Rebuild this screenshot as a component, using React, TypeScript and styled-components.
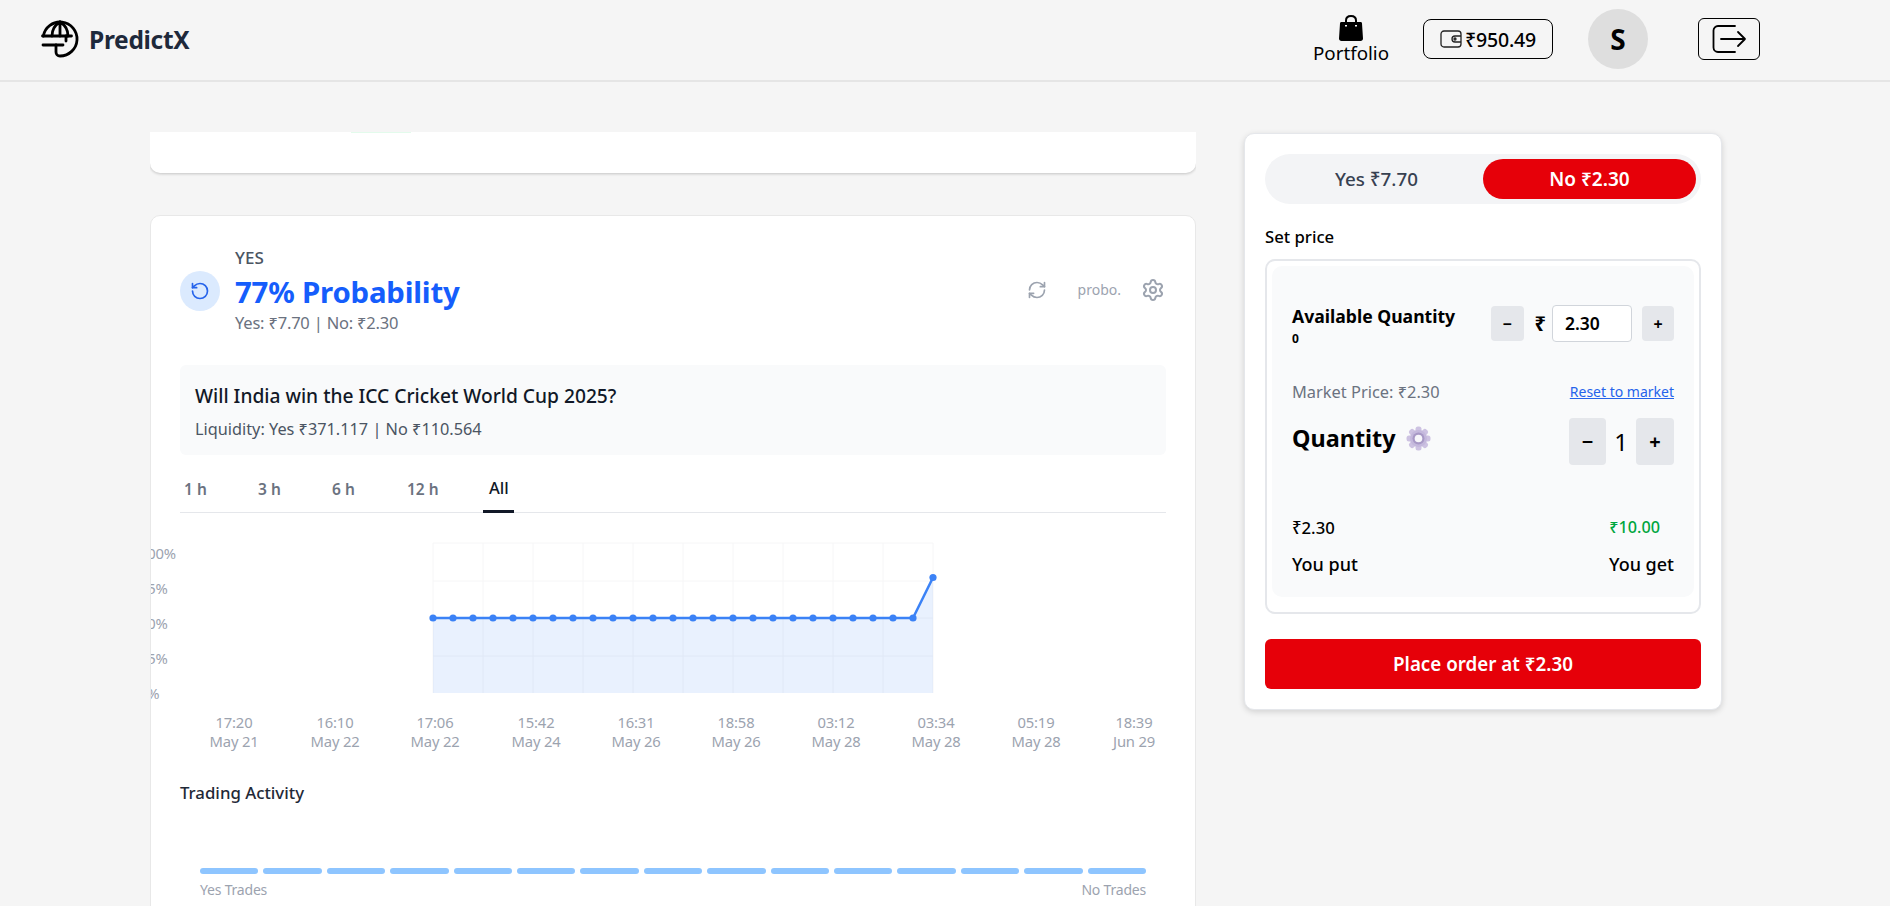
import React from 'react';
import styled, { createGlobalStyle } from 'styled-components';
import { RefreshCw, RotateCcw, Settings } from 'lucide-react';

const GlobalStyle = createGlobalStyle`
  html, body { margin: 0; padding: 0; height: 100%; overflow: hidden; background: #f5f5f5; }
  body { font-family: "Noto Sans", "Open Sans", sans-serif; color: #000; }
  * { box-sizing: border-box; }
`;

const Page = styled.div`
  width: 1890px;
  height: 906px;
  overflow: hidden;
  display: flex;
  flex-direction: column;
`;

const Header = styled.header`
  height: 82px;
  flex: none;
  display: flex;
  align-items: center;
  border-bottom: 2px solid #e5e5e5;
  padding: 0 130px 2px 40px;
`;

const Brand = styled.div`
  display: flex;
  align-items: center;
  gap: 9px;
  margin-right: auto;
`;

const BrandName = styled.span`
  font-size: 24.500px;
  font-weight: 700;
  color: #1e293b;
  letter-spacing: -0.3px;
`;

const PortfolioLink = styled.div`
  display: flex;
  flex-direction: column;
  align-items: center;
  width: 76px;
  margin-right: 34px;
  font-size: 18.800px;
  line-height: 25px;
  padding-top: 2px;
  white-space: nowrap;
`;

const WalletButton = styled.div`
  width: 130px;
  height: 40px;
  border: 1px solid #000;
  border-radius: 8px;
  display: flex;
  align-items: center;
  justify-content: center;
  gap: 3px;
  font-size: 19.500px;
  font-weight: 500;
  letter-spacing: -0.2px;
  margin-right: 35px;
`;

const Avatar = styled.div`
  width: 60px;
  height: 60px;
  border-radius: 50%;
  background: #dedede;
  display: flex;
  align-items: center;
  justify-content: center;
  font-size: 28px;
  font-weight: 700;
  margin-right: 50px;
`;

const LogoutButton = styled.div`
  width: 62px;
  height: 42px;
  border: 1px solid #000;
  border-radius: 6px;
  display: flex;
  align-items: center;
  justify-content: center;
`;

const Main = styled.main`
  flex: 1;
  min-height: 0;
  display: flex;
  align-items: flex-start;
  gap: 48px;
  padding: 50px 0 0 150px;
`;

const LeftColumn = styled.div`
  width: 1046px;
  height: 774px;
  overflow: hidden;
  display: flex;
  flex-direction: column;
  gap: 42px;
  flex: none;
`;

const ClippedCard = styled.div`
  height: 41px;
  flex: none;
  background: #fff;
  border-radius: 0 0 10px 10px;
  box-shadow: 0 1px 3px rgba(0, 0, 0, 0.2);
  margin: 0 0 3px;
  padding-left: 201px;
`;

const GreenSliver = styled.div`
  width: 60px;
  height: 1px;
  background: #e3fbec;
`;

const ChartCard = styled.section`
  flex: none;
  height: 760px;
  margin-top: -3px;
  background: #fff;
  border: 1px solid #e8e8e8;
  border-radius: 10px;
  padding: 0 29px;
  overflow: hidden;
`;

const CardTop = styled.div`
  height: 149px;
  display: flex;
  align-items: center;
  padding-top: 1px;
`;

const IconCircle = styled.div`
  width: 40px;
  height: 40px;
  border-radius: 50%;
  background: #dbeafe;
  color: #2563eb;
  display: flex;
  align-items: center;
  justify-content: center;
  margin-right: 15px;
`;

const Titles = styled.div`
  display: flex;
  flex-direction: column;
  margin-right: auto;
`;

const YesLabel = styled.span`
  font-size: 17px;
  line-height: 20px;
  font-weight: 500;
  color: #4b5563;
`;

const Probability = styled.span`
  font-size: 29.400px;
  line-height: 36px;
  margin-top: 6px;
  font-weight: 700;
  color: #155dfc;
  letter-spacing: -0.2px;
`;

const PriceLine = styled.span`
  font-size: 16.500px;
  line-height: 24px;
  margin-top: 1px;
  color: #6b7280;
  letter-spacing: -0.2px;
`;

const CardTools = styled.div`
  display: flex;
  align-items: center;
  color: #9ca3af;
  margin: 0 1px 3px 0;
`;

const ProboText = styled.span`
  font-size: 14px;
  margin: 0 20px 0 31px;
`;

const QuestionBox = styled.div`
  height: 90px;
  background: #f9fafb;
  border-radius: 6px;
  padding: 17px 15px 0;
`;

const QuestionTitle = styled.div`
  font-size: 19.200px;
  line-height: 28px;
  font-weight: 500;
  color: #111827;
`;

const Liquidity = styled.div`
  font-size: 16.300px;
  line-height: 24px;
  margin-top: 7px;
  color: #4b5563;
`;

const Tabs = styled.div`
  height: 58px;
  display: flex;
  align-items: flex-end;
  border-bottom: 1px solid #e5e7eb;
`;

const Tab = styled.div<{ $active?: boolean; $width: number }>`
  width: ${(p) => p.$width}px;
  height: 41px;
  padding: ${(p) => (p.$active ? 4 : 5)}px 0 0 ${(p) => (p.$active ? 6 : 4)}px;
  font-size: ${(p) => (p.$active ? 16.5 : 15.5)}px;
  line-height: 24px;
  white-space: nowrap;
  font-weight: ${(p) => (p.$active ? 500 : 600)};
  color: ${(p) => (p.$active ? '#111827' : '#6b7280')};
  border-bottom: ${(p) => (p.$active ? '3px solid #111827' : 'none')};
  margin-bottom: -1px;
  flex: none;
`;

const ChartSvg = styled.svg`
  display: block;
  margin-top: 17px;
  overflow: visible;
`;

const ActivityTitle = styled.h3`
  margin: 21px 0 0;
  font-size: 16.800px;
  line-height: 24px;
  font-weight: 500;
  color: #1f2937;
`;

const ActivityBars = styled.div`
  display: flex;
  gap: 5px;
  margin: 63px 20px 0;
`;

const ActivityBar = styled.div`
  flex: 1;
  height: 6px;
  border-radius: 3px;
  background: #8ec5ff;
`;

const ActivityLabels = styled.div`
  display: flex;
  justify-content: space-between;
  margin: 6px 20px 0;
  font-size: 14px;
  line-height: 20px;
  color: #9ca3af;
  letter-spacing: -0.2px;
`;

const OrderCard = styled.aside`
  width: 478px;
  height: 577px;
  flex: none;
  margin-top: 1px;
  background: #fff;
  border: 1px solid #e5e7eb;
  border-radius: 10px;
  box-shadow: 0 2px 6px rgba(0, 0, 0, 0.15);
  padding: 20px 20px 0;
`;

const Toggle = styled.div`
  height: 50px;
  background: #f3f4f6;
  border-radius: 25px;
  display: flex;
  align-items: center;
  padding: 0 5px;
`;

const ToggleOption = styled.div<{ $active?: boolean }>`
  flex: 1;
  height: 40px;
  border-radius: 20px;
  display: flex;
  align-items: center;
  justify-content: center;
  font-size: ${(p) => (p.$active ? 19 : 18.8)}px;
  font-weight: ${(p) => (p.$active ? 600 : 500)};
  background: ${(p) => (p.$active ? '#e60009' : 'transparent')};
  color: ${(p) => (p.$active ? '#fff' : '#374151')};
`;

const SetPrice = styled.div`
  font-size: 16.700px;
  line-height: 24px;
  font-weight: 500;
  margin-top: 21px;
`;

const PriceFrame = styled.div`
  height: 355px;
  margin-top: 10px;
  border: 2px solid #e5e7eb;
  border-radius: 10px;
  padding: 5px 5px 15px;
`;

const PriceInner = styled.div`
  height: 100%;
  background: #f9fafb;
  border-radius: 10px;
  padding: 0 20px;
  display: flex;
  flex-direction: column;
`;

const AvailableRow = styled.div`
  display: flex;
  justify-content: space-between;
  align-items: flex-start;
  padding-top: 39px;
  height: 110px;
`;

const AvailableTitle = styled.div`
  font-size: 17.600px;
  line-height: 22px;
  font-weight: 700;
`;

const AvailableCount = styled.div`
  font-size: 12px;
  line-height: 16px;
  font-weight: 700;
  margin-top: 4px;
`;

const PriceStepper = styled.div`
  display: flex;
  align-items: center;
  height: 37px;
`;

const StepButton = styled.div<{ $w: number; $h: number; $size: number }>`
  width: ${(p) => p.$w}px;
  height: ${(p) => p.$h}px;
  flex: none;
  background: #e5e7eb;
  border-radius: 4px;
  display: flex;
  align-items: center;
  justify-content: center;
  font-size: ${(p) => p.$size}px;
  font-weight: 700;
`;

const RupeeMark = styled.span`
  font-size: 20px;
  font-weight: 700;
  margin: 0 6px 0 11px;
`;

const PriceInput = styled.div`
  width: 80px;
  height: 37px;
  background: #fff;
  border: 1px solid #d1d5db;
  border-radius: 4px;
  font-size: 17.500px;
  font-weight: 600;
  line-height: 35px;
  padding-left: 12px;
  margin-right: 10px;
`;

const MarketRow = styled.div`
  display: flex;
  justify-content: space-between;
  align-items: center;
  height: 30px;
`;

const MarketPrice = styled.span`
  font-size: 16.400px;
  color: #6b7280;
`;

const ResetLink = styled.a`
  font-size: 14px;
  color: #2563eb;
  text-decoration: underline;
`;

const QuantityRow = styled.div`
  display: flex;
  justify-content: space-between;
  align-items: flex-start;
  margin-top: 12px;
  height: 47px;
`;

const QuantityTitle = styled.div`
  display: flex;
  align-items: center;
  gap: 10px;
  height: 40px;
  font-size: 23.400px;
  font-weight: 700;
`;

const QuantityStepper = styled.div`
  display: flex;
  align-items: center;
`;

const QuantityValue = styled.span`
  width: 30px;
  text-align: center;
  font-size: 24px;
`;

const Payout = styled.div`
  display: grid;
  grid-template-columns: 1fr auto;
  row-gap: 13px;
  margin-top: 51px;
`;

const PayoutValue = styled.div<{ $green?: boolean }>`
  font-size: ${(p) => (p.$green ? 16.2 : 16.7)}px;
  line-height: 23px;
  font-weight: 500;
  color: ${(p) => (p.$green ? '#00a63e' : '#000')};
  padding-right: ${(p) => (p.$green ? 14 : 0)}px;
  text-align: ${(p) => (p.$green ? 'right' : 'left')};
`;

const PayoutLabel = styled.div<{ $end?: boolean }>`
  font-size: 18px;
  line-height: 24px;
  font-weight: 500;
  text-align: ${(p) => (p.$end ? 'right' : 'left')};
`;

const PlaceOrder = styled.button`
  display: block;
  width: 100%;
  height: 50px;
  margin-top: 25px;
  border: none;
  border-radius: 6px;
  background: #e60009;
  color: #fff;
  font-family: inherit;
  font-size: 18.800px;
  font-weight: 600;
`;

const LogoIcon = () => (
  <svg width="40" height="40" viewBox="0 0 40 40" fill="none" stroke="#000" strokeWidth="2.800" strokeLinecap="round">
    <path d="M3.300 17A17 17 0 1 1 20 37c-2.500 0-4-2-4-4v-7" />
    <path d="M2.500 17h29M3 26h20" />
    <path d="M20 3v14M20 3c-5 3-8 8-8 14M20 3c5 3 8 8 8 14M26 17v5" />
  </svg>
);

const BagIcon = () => (
  <svg width="24" height="26" viewBox="0 0 24 26">
    <path d="M2.500 7h19c1 0 1.500.6 1.500 1.500l1 15c0 1.500-1 2.500-2.500 2.500h-19C1 26 0 25 0 23.500l1-15C1 7.600 1.500 7 2.500 7z" fill="#000" />
    <path d="M7 10V5.500C7 2.500 9 1 12 1s5 1.500 5 4.500V10" fill="none" stroke="#000" strokeWidth="2" />
    <path d="M7 10v1.500M17 10v1.500" stroke="#f5f5f5" strokeWidth="2" />
  </svg>
);

const WalletIcon = () => (
  <svg width="22" height="18" viewBox="0 0 22 18" fill="none" stroke="#222" strokeWidth="1.300">
    <rect x="1" y="1" width="20" height="16" rx="3" />
    <path d="M21 6h-6a3 3 0 0 0 0 6h6" />
    <circle cx="15" cy="9" r="1" />
  </svg>
);

const LogoutIcon = () => (
  <svg width="36" height="30" viewBox="0 0 36 30" fill="none" stroke="#000" strokeWidth="1.800" strokeLinecap="round" strokeLinejoin="round">
    <path d="M24 2H7a4.500 4.500 0 0 0-4.500 4.500v17A4.500 4.500 0 0 0 7 28h17" />
    <path d="M10 15h24M27 8l7 7-7 7" />
  </svg>
);

const GearEmoji = () => (
  <svg width="25" height="25" viewBox="0 0 25 25">
    <g fill="#cdc2e2">
      {[0, 45, 90, 135, 180, 225, 270, 315].map((a) => (
        <rect key={a} x="9.500" y="0.500" width="6" height="7" rx="2.500" transform={`rotate(${a} 12.500 12.500)`} />
      ))}
    </g>
    <circle cx="12.500" cy="12.500" r="8.500" fill="#c4b8dc" />
    <circle cx="12.500" cy="12.500" r="6" fill="#a899c6" />
    <circle cx="12.500" cy="12.500" r="3.800" fill="#f7f6fb" />
  </svg>
);

const gridX = [433, 483, 533, 583, 633, 683, 733, 783, 833, 883, 933];
const gridY = [543, 581, 618, 656];
const yLabels = [
  { text: '100%', y: 559 },
  { text: '75%', y: 594 },
  { text: '50%', y: 629 },
  { text: '25%', y: 664 },
  { text: '0%', y: 699 },
];
const xLabels = [
  { time: '17:20', date: 'May 21', x: 234 },
  { time: '16:10', date: 'May 22', x: 335 },
  { time: '17:06', date: 'May 22', x: 435 },
  { time: '15:42', date: 'May 24', x: 536 },
  { time: '16:31', date: 'May 26', x: 636 },
  { time: '18:58', date: 'May 26', x: 736 },
  { time: '03:12', date: 'May 28', x: 836 },
  { time: '03:34', date: 'May 28', x: 936 },
  { time: '05:19', date: 'May 28', x: 1036 },
  { time: '18:39', date: 'Jun 29', x: 1134 },
];
const points = Array.from({ length: 26 }, (_, i) => ({
  x: 433 + i * 20,
  y: i === 25 ? 577.5 : 618,
}));
const linePath = points.map((p) => `${p.x},${p.y}`).join(' ');

const PriceChart = () => (
  <ChartSvg width="986" height="230" viewBox="180 530 986 230">
    {gridX.map((x) => (
      <line key={x} x1={x} x2={x} y1={543} y2={693} stroke="#f6f6f7" />
    ))}
    {gridY.map((y) => (
      <line key={y} x1={433} x2={933} y1={y} y2={y} stroke="#f6f6f7" />
    ))}
    <polygon points={`433,693 ${linePath} 933,693`} fill="#3b82f6" fillOpacity="0.11" />
    <polyline points={linePath} fill="none" stroke="#3b82f6" strokeWidth="2.500" />
    {points.map((p) => (
      <circle key={p.x} cx={p.x} cy={p.y} r="3.600" fill="#3b82f6" />
    ))}
    <g fontSize="14.800" fill="#9ca3af" letterSpacing="-0.2">
      {yLabels.map((l) => (
        <text key={l.text} x="139" y={l.y}>{l.text}</text>
      ))}
      {xLabels.map((l) => (
        <text key={l.x} textAnchor="middle">
          <tspan x={l.x} y="728">{l.time}</tspan>
          <tspan x={l.x} y="747">{l.date}</tspan>
        </text>
      ))}
    </g>
  </ChartSvg>
);

export default function App() {
  return (
    <Page>
      <GlobalStyle />
      <Header>
        <Brand>
          <LogoIcon />
          <BrandName>PredictX</BrandName>
        </Brand>
        <PortfolioLink>
          <BagIcon />
          Portfolio
        </PortfolioLink>
        <WalletButton>
          <WalletIcon />
          ₹950.49
        </WalletButton>
        <Avatar>S</Avatar>
        <LogoutButton>
          <LogoutIcon />
        </LogoutButton>
      </Header>
      <Main>
        <LeftColumn>
          <ClippedCard>
            <GreenSliver />
          </ClippedCard>
          <ChartCard>
            <CardTop>
              <IconCircle>
                <RotateCcw size={20} strokeWidth={2} />
              </IconCircle>
              <Titles>
                <YesLabel>YES</YesLabel>
                <Probability>77% Probability</Probability>
                <PriceLine>Yes: ₹7.70 | No: ₹2.30</PriceLine>
              </Titles>
              <CardTools>
                <RefreshCw size={20} strokeWidth={2} />
                <ProboText>probo.</ProboText>
                <Settings size={24} strokeWidth={2} />
              </CardTools>
            </CardTop>
            <QuestionBox>
              <QuestionTitle>Will India win the ICC Cricket World Cup 2025?</QuestionTitle>
              <Liquidity>Liquidity: Yes ₹371.117 | No ₹110.564</Liquidity>
            </QuestionBox>
            <Tabs>
              <Tab $width={74}>1 h</Tab>
              <Tab $width={74}>3 h</Tab>
              <Tab $width={75}>6 h</Tab>
              <Tab $width={80}>12 h</Tab>
              <Tab $active $width={31}>All</Tab>
            </Tabs>
            <PriceChart />
            <ActivityTitle>Trading Activity</ActivityTitle>
            <ActivityBars>
              {Array.from({ length: 15 }, (_, i) => (
                <ActivityBar key={i} />
              ))}
            </ActivityBars>
            <ActivityLabels>
              <span>Yes Trades</span>
              <span>No Trades</span>
            </ActivityLabels>
          </ChartCard>
        </LeftColumn>
        <OrderCard>
          <Toggle>
            <ToggleOption>Yes ₹7.70</ToggleOption>
            <ToggleOption $active>No ₹2.30</ToggleOption>
          </Toggle>
          <SetPrice>Set price</SetPrice>
          <PriceFrame>
            <PriceInner>
              <AvailableRow>
                <div>
                  <AvailableTitle>Available Quantity</AvailableTitle>
                  <AvailableCount>0</AvailableCount>
                </div>
                <PriceStepper>
                  <StepButton $w={33} $h={35} $size={16}>−</StepButton>
                  <RupeeMark>₹</RupeeMark>
                  <PriceInput>2.30</PriceInput>
                  <StepButton $w={32} $h={35} $size={16}>+</StepButton>
                </PriceStepper>
              </AvailableRow>
              <MarketRow>
                <MarketPrice>Market Price: ₹2.30</MarketPrice>
                <ResetLink href="#">Reset to market</ResetLink>
              </MarketRow>
              <QuantityRow>
                <QuantityTitle>
                  Quantity
                  <GearEmoji />
                </QuantityTitle>
                <QuantityStepper>
                  <StepButton $w={37} $h={47} $size={20}>−</StepButton>
                  <QuantityValue>1</QuantityValue>
                  <StepButton $w={38} $h={47} $size={20}>+</StepButton>
                </QuantityStepper>
              </QuantityRow>
              <Payout>
                <PayoutValue>₹2.30</PayoutValue>
                <PayoutValue $green>₹10.00</PayoutValue>
                <PayoutLabel>You put</PayoutLabel>
                <PayoutLabel $end>You get</PayoutLabel>
              </Payout>
            </PriceInner>
          </PriceFrame>
          <PlaceOrder>Place order at ₹2.30</PlaceOrder>
        </OrderCard>
      </Main>
    </Page>
  );
}
